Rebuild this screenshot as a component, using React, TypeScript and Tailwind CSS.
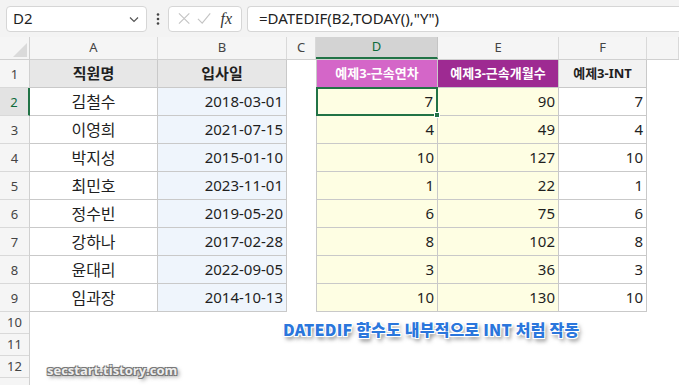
import React from 'react';

const rows = [
  { name: '김철수', date: '2018-03-01', y: 7, m: 90, i: 7 },
  { name: '이영희', date: '2021-07-15', y: 4, m: 49, i: 4 },
  { name: '박지성', date: '2015-01-10', y: 10, m: 127, i: 10 },
  { name: '최민호', date: '2023-11-01', y: 1, m: 22, i: 1 },
  { name: '정수빈', date: '2019-05-20', y: 6, m: 75, i: 6 },
  { name: '강하나', date: '2017-02-28', y: 8, m: 102, i: 8 },
  { name: '윤대리', date: '2022-09-05', y: 3, m: 36, i: 3 },
  { name: '임과장', date: '2014-10-13', y: 10, m: 130, i: 10 },
];

const cols = ['A', 'B', 'C', 'D', 'E', 'F', ''];

const gridCols = 'grid grid-cols-[30px_128px_129px_29px_122px_121px_88px_1fr]';

export default function App() {
  return (
    <div className="w-[679px] h-[385px] overflow-hidden bg-white font-['Noto_Sans','Noto_Sans_CJK_KR',sans-serif] text-[#1f1f1f] relative">
      {/* Formula bar */}
      <div className="h-[37px] bg-[#f3f3f3] flex items-center gap-0 pl-[6px]">
        <div className="w-[141px] h-[26px] bg-white border border-[#d6d6d6] rounded-[4px] flex items-center justify-between px-[6px]">
          <span className="text-[15px] leading-none">D2</span>
          <svg width="12" height="12" viewBox="0 0 12 12" fill="none" stroke="#555" strokeWidth="1.2">
            <path d="M2 4.5l4 4 4-4" />
          </svg>
        </div>
        <div className="w-[21px] flex justify-center text-[#444]">
          <svg width="4" height="14" viewBox="0 0 4 14" fill="#444">
            <circle cx="2" cy="2.5" r="1.3" />
            <circle cx="2" cy="7" r="1.3" />
            <circle cx="2" cy="11.5" r="1.3" />
          </svg>
        </div>
        <div className="w-[74px] h-[26px] bg-white border border-[#d6d6d6] rounded-[4px] flex items-center px-[9px] gap-[7px]">
          <svg width="13" height="13" viewBox="0 0 13 13" stroke="#c4c4c4" strokeWidth="1.2">
            <path d="M1 1l11 11M12 1L1 12" />
          </svg>
          <svg width="15" height="13" viewBox="0 0 15 13" fill="none" stroke="#c4c4c4" strokeWidth="1.2">
            <path d="M1 7l4.5 4.5L14 1" />
          </svg>
          <span className="ml-[2px] font-['Liberation_Serif',serif] italic text-[16px] leading-none text-[#333]">
            fx
          </span>
        </div>
        <div className="ml-[5px] flex-1 h-[26px] bg-white border border-[#d6d6d6] rounded-l-[4px] border-r-0 flex items-center pl-[11px]">
          <span className="text-[15px] leading-none text-[#222]">=DATEDIF(B2,TODAY(),"Y")</span>
        </div>
      </div>

      {/* Column headers */}
      <div className={`${gridCols} h-[23px] bg-[#f5f5f5] border-b border-[#d0d0d0]`}>
        <div className="border-r border-[#d0d0d0] relative">
          <div className="absolute right-[2px] bottom-[2px] w-0 h-0 border-l-[14px] border-l-transparent border-b-[14px] border-b-[#dadada]" />
        </div>
        {cols.map((c, k) => (
          <div
            key={k}
            className={
              c === 'D'
                ? 'bg-[#d3d3d3] text-[#0e6b3a] border-r border-[#c4c4c4] border-b-2 border-b-[#217346] flex items-center justify-center text-[13px]'
                : 'border-r border-[#d9d9d9] text-[#444] flex items-center justify-center text-[13px]'
            }
          >
            {c}
          </div>
        ))}
      </div>

      {/* Body */}
      <div className="grid grid-cols-[30px_1fr]">
        {/* Row headers */}
        <div className="flex flex-col bg-[#f5f5f5] border-r border-[#d0d0d0]">
          {[1, 2, 3, 4, 5, 6, 7, 8, 9].map((n) => (
            <div
              key={n}
              className={
                n === 2
                  ? 'h-[28px] flex items-end justify-center pb-[3px] text-[13px] text-[#0e6b3a] bg-[#e3e3e3] border-b border-[#d9d9d9] border-r-2 border-r-[#217346] -mr-px'
                  : 'h-[28px] flex items-end justify-center pb-[3px] text-[13px] text-[#444] border-b border-[#d9d9d9]'
              }
            >
              {n}
            </div>
          ))}
          {[10, 11, 12].map((n) => (
            <div
              key={n}
              className="h-[22px] flex items-center justify-center text-[13px] text-[#444] border-b border-[#d9d9d9]"
            >
              {n}
            </div>
          ))}
          <div className="h-[22px]" />
        </div>

        {/* Cells */}
        <div className="grid grid-cols-[128px_129px_29px_122px_121px_88px_1fr] auto-rows-[28px] content-start">
          {/* Header row */}
          <div className="bg-[#e7e7e7] border-b border-r border-[#c9c9c9] flex items-center justify-center font-bold text-[15px]">
            직원명
          </div>
          <div className="bg-[#e7e7e7] border-b border-r border-[#c9c9c9] flex items-center justify-center font-bold text-[15px]">
            입사일
          </div>
          <div />
          <div className="bg-[#d466c8] border-l border-b border-r border-[#c9c9c9] flex items-center justify-center font-bold text-[13px] text-white">
            예제3-근속연차
          </div>
          <div className="bg-[#9e2a92] border-b border-r border-[#c9c9c9] flex items-center justify-center font-bold text-[13px] text-white">
            예제3-근속개월수
          </div>
          <div className="bg-[#f2f2f2] border-b border-r border-[#c9c9c9] flex items-center justify-center font-bold text-[13px]">
            예제3-INT
          </div>
          <div />

          {rows.map((r, k) => (
            <React.Fragment key={k}>
              <div className="bg-white border-b border-r border-[#c9c9c9] flex items-center justify-center text-[16px]">
                {r.name}
              </div>
              <div className="bg-[#eff5fc] border-b border-r border-[#c9c9c9] flex items-center justify-end pr-[3px] text-[15px]">
                {r.date}
              </div>
              <div />
              <div
                className={
                  k === 0
                    ? 'relative bg-[#fefee3] border-2 border-[#217346] -mt-px flex items-center justify-end pr-[3px] text-[15px]'
                    : 'bg-[#fefee3] border-l border-b border-r border-[#c9c9c9] flex items-center justify-end pr-[3px] text-[15px]'
                }
              >
                {r.y}
                {k === 0 && (
                  <div className="absolute -right-[4px] -bottom-[4px] w-[6px] h-[6px] bg-[#217346] border border-white" />
                )}
              </div>
              <div className="bg-[#fefee3] border-b border-r border-[#c9c9c9] flex items-center justify-end pr-[3px] text-[15px]">
                {r.m}
              </div>
              <div className="bg-white border-b border-r border-[#c9c9c9] flex items-center justify-end pr-[3px] text-[15px]">
                {r.i}
              </div>
              <div />
            </React.Fragment>
          ))}
        </div>
      </div>

      {/* Overlay caption */}
      <div className="absolute left-[283px] top-[317px] font-['Noto_Sans_CJK_KR',sans-serif] font-black text-[16px] leading-[24px] tracking-[0.2px] text-[#2a76dc] [text-shadow:-1px_-1px_0_#fff,1px_-1px_0_#fff,-1px_1px_0_#fff,1px_1px_0_#fff,0_0_3px_#fff,2px_3px_4px_rgba(0,0,0,0.55)]">
        DATEDIF 함수도 내부적으로 INT 처럼 작동
      </div>

      {/* Watermark */}
      <div className="absolute left-[47px] top-[360px] font-['Open_Sans',sans-serif] font-bold text-[13px] leading-[20px] text-[#eeeeee] [text-shadow:-1px_-1px_0_#777,1px_-1px_0_#777,-1px_1px_0_#777,1px_1px_0_#777,2px_2px_4px_rgba(0,0,0,0.6)]">
        secstart.tistory.com
      </div>
    </div>
  );
}
